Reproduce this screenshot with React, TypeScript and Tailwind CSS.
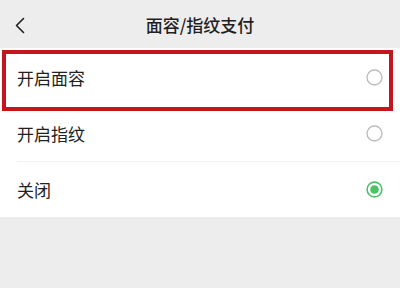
import React from "react";

const font = { fontFamily: '"Noto Sans CJK SC", "Noto Sans", sans-serif' };

function Radio({ checked }: { checked?: boolean }) {
  if (checked) {
    return (
      <svg width="17" height="17" viewBox="0 0 17 17">
        <circle cx="8.5" cy="8.5" r="7.4" fill="none" stroke="#4cc265" strokeWidth="1.6" />
        <circle cx="8.5" cy="8.5" r="4.3" fill="#4cc265" />
      </svg>
    );
  }
  return (
    <svg width="17" height="17" viewBox="0 0 17 17">
      <circle cx="8.5" cy="8.5" r="7.5" fill="none" stroke="#bdbdbd" strokeWidth="1.4" />
    </svg>
  );
}

export default function App() {
  return (
    <div className="relative w-[400px] h-[288px] bg-[#ededed] overflow-hidden" style={font}>
      <div className="relative h-[48px] flex items-center justify-center bg-[#ededed]">
        <svg className="absolute left-[14px] top-[17px]" width="12" height="17" viewBox="0 0 12 17">
          <path d="M9.5 1.5 L2.5 8.5 L9.5 15.5" fill="none" stroke="#222" strokeWidth="1.6" strokeLinecap="round" strokeLinejoin="round" />
        </svg>
        <span className="text-[17px] text-[#1f1f1f] font-medium leading-none">面容/指纹支付</span>
      </div>
      <div className="bg-white">
        <div className="h-[58px] flex items-center justify-between pl-[17px] pr-[17px] pt-[1px]">
          <span className="text-[17px] text-[#222] leading-none">开启面容</span>
          <Radio />
        </div>
        <div className="h-[55px] flex items-center justify-between pl-[17px] pr-[17px]">
          <span className="text-[17px] text-[#222] leading-none">开启指纹</span>
          <Radio />
        </div>
        <div className="ml-[17px] h-px bg-[#f2f2f2]" />
        <div className="h-[55px] flex items-center justify-between pl-[17px] pr-[17px]">
          <span className="text-[17px] text-[#222] leading-none">关闭</span>
          <Radio checked />
        </div>
      </div>
      <div className="absolute left-[2px] top-[50px] w-[391px] h-[61px] border-[4px] border-[#c4161c]" />
    </div>
  );
}
